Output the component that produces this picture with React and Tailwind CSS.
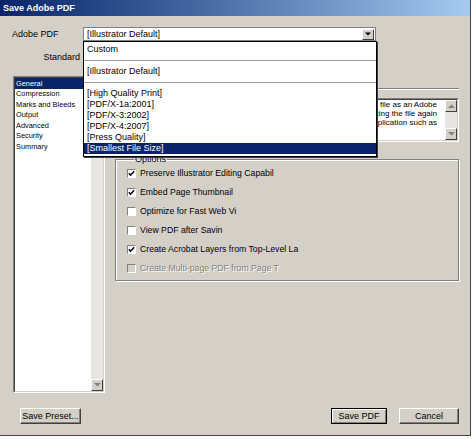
import React from "react";

const presets = [
  "[High Quality Print]",
  "[PDF/X-1a:2001]",
  "[PDF/X-3:2002]",
  "[PDF/X-4:2007]",
  "[Press Quality]",
  "[Smallest File Size]",
];

const sections = [
  "General",
  "Compression",
  "Marks and Bleeds",
  "Output",
  "Advanced",
  "Security",
  "Summary",
];

// labels are cut short in the dialog itself, keep them as shown
const options = [
  { label: "Preserve Illustrator Editing Capabil", checked: true },
  { label: "Embed Page Thumbnail", checked: true },
  { label: "Optimize for Fast Web Vi", checked: false },
  { label: "View PDF after Savin", checked: false },
  { label: "Create Acrobat Layers from Top-Level La", checked: true },
  { label: "Create Multi-page PDF from Page T", checked: false, disabled: true },
];

function Arrow({ up }) {
  return (
    <div className="w-[12px] h-[12px] shrink-0 bg-[#d4d0c8] border border-t-white border-l-white border-r-[#404040] border-b-[#404040] flex items-center justify-center">
      <svg width="7" height="4" viewBox="0 0 7 4">
        {up ? (
          <path d="M0 4 L3.5 0.5 L7 4 Z" fill="#808080" />
        ) : (
          <path d="M0 0 L7 0 L3.5 3.5 Z" fill="#808080" />
        )}
      </svg>
    </div>
  );
}

function Button({ children, width, isDefault }) {
  return (
    <button
      className={`${width} h-[16px] bg-[#d4d0c8] text-[9px] text-black leading-none flex items-center justify-center border ${
        isDefault
          ? "border-black shadow-[inset_1px_1px_0_#fff,inset_-1px_-1px_0_#808080]"
          : "border-t-white border-l-white border-r-[#404040] border-b-[#404040] shadow-[inset_-1px_-1px_0_#808080]"
      }`}
    >
      {children}
    </button>
  );
}

function Checkbox({ checked, disabled }) {
  return (
    <div
      className={`w-[9px] h-[9px] shrink-0 border border-t-[#808080] border-l-[#808080] border-r-white border-b-white flex items-center justify-center ${
        disabled ? "bg-[#d4d0c8]" : "bg-white"
      }`}
    >
      {checked && (
        <svg width="7" height="7" viewBox="0 0 7 7">
          <path d="M0.8 3.2 L2.6 5.2 L6.2 1.2" fill="none" stroke="#000" strokeWidth="1.5" />
        </svg>
      )}
    </div>
  );
}

export default function App() {
  return (
    <div className="relative w-[471px] h-[436px] bg-[#d4d0c8] border-r border-b border-[#404040] flex flex-col font-['Liberation_Sans',Arial,sans-serif] text-black select-none">
      {/* title bar */}
      <div className="h-[16px] mb-[1px] bg-linear-to-r from-[#0a246a] to-[#a6caf0] flex items-center pl-[3px]">
        <span className="text-white font-bold text-[9px] leading-none">Save Adobe PDF</span>
      </div>

      {/* preset row */}
      <div className="flex items-center mt-[10px] h-[14px]">
        <div className="w-[83px] pl-[12px] text-[9px] leading-none">Adobe PDF</div>
        <div className="w-[293px] h-[14px] bg-white border border-[#808080] flex items-center justify-between pl-[3px] pr-[1px]">
          <span className="text-[9px] leading-none">[Illustrator Default]</span>
          <div className="w-[12px] h-[11px] bg-[#d4d0c8] border border-t-white border-l-white border-r-[#404040] border-b-[#404040] flex items-center justify-center">
            <svg width="6" height="4" viewBox="0 0 6 4">
              <path d="M0 0.5 L6 0.5 L3 3.5 Z" fill="#000" />
            </svg>
          </div>
        </div>
      </div>

      {/* standard row */}
      <div className="flex items-center mt-[10px] h-[13px]">
        <div className="w-[80px] text-right text-[9px] leading-none">Standard</div>
      </div>

      {/* main area */}
      <div className="flex mt-[12px] h-[317px]">
        <div className="ml-[13px] w-[92px] h-full border border-t-[#808080] border-l-[#808080] border-r-white border-b-white">
          <div className="h-full border border-t-[#404040] border-l-[#404040] border-r-[#d4d0c8] border-b-[#d4d0c8] flex">
            <div className="flex-1 bg-white flex flex-col">
              {sections.map((s, i) => (
                <div
                  key={s}
                  className={`h-[10.5px] flex items-center pl-[1px] text-[7.4px] leading-none ${
                    i === 0 ? "bg-[#0a246a] text-white" : ""
                  }`}
                >
                  {s}
                </div>
              ))}
            </div>
            <div className="w-[12px] bg-[#e8e6e2] flex flex-col justify-between">
              <Arrow up />
              <Arrow />
            </div>
          </div>
        </div>

        <div className="ml-[10px] w-[344px] flex flex-col">
          <div className="mt-[12px] h-[2px] border-t border-b border-t-[#808080] border-b-white" />

          <div className="mt-[8px] h-[44px] bg-white border border-t-[#808080] border-l-[#808080] border-r-white border-b-white">
            <div className="h-full border border-t-[#404040] border-l-[#404040] border-r-[#d4d0c8] border-b-[#d4d0c8] flex">
              <div className="flex-1 flex flex-col items-end pr-[8px] overflow-hidden text-[8px] leading-[9px]">
                <div className="whitespace-nowrap">These are the default settings when saving an Illustrator file as an Adobe</div>
                <div className="whitespace-nowrap">PDF document. Use these settings when you plan on editing the file again</div>
                <div className="whitespace-nowrap">in Illustrator, or when you need to place it in a layout application such as</div>
              </div>
              <div className="w-[12px] bg-[#e8e6e2] flex flex-col justify-between">
                <Arrow up />
                <Arrow />
              </div>
            </div>
          </div>

          <fieldset className="mt-[12px] border border-[#808080] shadow-[1px_1px_0_#fff,inset_1px_1px_0_#fff] pl-[11px] pb-[2px]">
            <legend className="ml-[7px] px-[1px] h-[10px] text-[9px] leading-[10px]">Options</legend>
            {options.map((o) => (
              <div key={o.label} className="h-[19px] flex items-center gap-[4px]">
                <Checkbox checked={o.checked} disabled={o.disabled} />
                <span
                  className={`whitespace-nowrap text-[8.7px] leading-none ${
                    o.disabled ? "text-[#808080] [text-shadow:1px_1px_0_#fff]" : ""
                  }`}
                >
                  {o.label}
                </span>
              </div>
            ))}
          </fieldset>
        </div>
      </div>

      {/* buttons */}
      <div className="flex items-center mt-[15px] pl-[20px] pr-[11px]">
        <Button width="w-[61px]">Save Preset...</Button>
        <div className="flex-1" />
        <Button width="w-[56px]" isDefault>
          Save PDF
        </Button>
        <div className="w-[12px]" />
        <Button width="w-[60px]">Cancel</Button>
      </div>

      {/* open preset dropdown */}
      <div className="absolute left-[83px] top-[41px] w-[294px] h-[116px] bg-white border border-black shadow-[1px_1px_0_#404040] flex flex-col text-[9px] leading-none">
        <div className="h-[15px] flex items-center pl-[3px]">Custom</div>
        <div className="h-[7px] pt-[3px]">
          <div className="h-px bg-[#a0a0a0]" />
        </div>
        <div className="h-[14px] flex items-center pl-[3px]">[Illustrator Default]</div>
        <div className="h-[10px] pt-[4px]">
          <div className="h-px bg-[#a0a0a0]" />
        </div>
        {presets.map((p, i) => (
          <div
            key={p}
            className={`h-[11px] flex items-center pl-[3px] ${
              i === presets.length - 1 ? "bg-[#0a246a] text-white" : ""
            }`}
          >
            {p}
          </div>
        ))}
      </div>
    </div>
  );
}
